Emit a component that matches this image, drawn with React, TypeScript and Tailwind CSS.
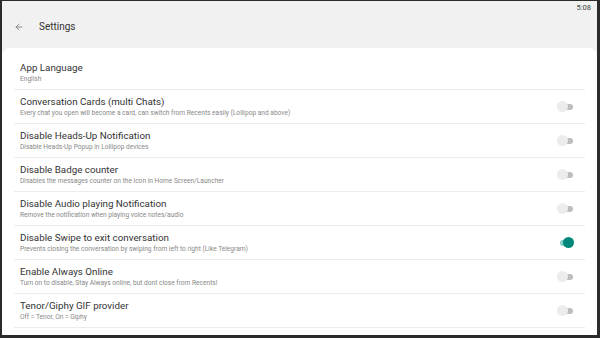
import { ArrowLeft } from 'lucide-react';

interface Setting {
  title: string;
  subtitle: string;
  toggle?: boolean;
  on?: boolean;
}

const settings: Setting[] = [
  { title: 'App Language', subtitle: 'English' },
  {
    title: 'Conversation Cards (multi Chats)',
    subtitle: 'Every chat you open will become a card, can switch from Recents easily (Lollipop and above)',
    toggle: true,
  },
  { title: 'Disable Heads-Up Notification', subtitle: 'Disable Heads-Up Popup in Lollipop devices', toggle: true },
  { title: 'Disable Badge counter', subtitle: 'Disables the messages counter on the icon in Home Screen/Launcher', toggle: true },
  { title: 'Disable Audio playing Notification', subtitle: 'Remove the notification when playing voice notes/audio', toggle: true },
  {
    title: 'Disable Swipe to exit conversation',
    subtitle: 'Prevents closing the conversation by swiping from left to right (Like Telegram)',
    toggle: true,
    on: true,
  },
  { title: 'Enable Always Online', subtitle: 'Turn on to disable, Stay Always online, but dont close from Recents!', toggle: true },
  { title: 'Tenor/Giphy GIF provider', subtitle: 'Off = Tenor, On = Giphy', toggle: true },
];

function Toggle({ on }: { on?: boolean }) {
  return (
    <div className="relative w-[17px] h-[11px] flex items-center">
      <div className={`h-[6px] w-[13px] rounded-full ml-[3px] ${on ? 'bg-[#80cbc4]' : 'bg-[#bdbdbd]'}`} />
      <div
        className={`absolute top-0 h-[11px] w-[11px] rounded-full ${
          on ? 'left-[6px] bg-[#00897b]' : 'left-0 bg-[#ececec]'
        }`}
      />
    </div>
  );
}

export default function App() {
  return (
    <div
      className="w-[600px] h-[338px] bg-[#2b2b2b] pt-[1px] pl-[2px] pr-[3px] pb-[3px] overflow-hidden"
      style={{ fontFamily: 'Roboto, "Noto Sans", sans-serif' }}
    >
      <div className="h-full bg-[#f1f1f1] flex flex-col">
        {/* Cabecera */}
        <div className="relative h-[47px] shrink-0 flex items-center pt-[4px]">
          <span className="absolute top-[1px] right-[6px] text-[7.5px] text-[#444]">5:08</span>
          <ArrowLeft className="ml-[12px] w-[10px] h-[10px] text-[#777]" strokeWidth={2} />
          <span className="ml-[15px] text-[10px] text-[#333]">Settings</span>
        </div>

        {/* Lista */}
        <div className="flex-1 bg-white rounded-t-[8px] pt-[8px] px-[12px]">
          {settings.map((s) => (
            <div key={s.title} className="h-[34px] border-b border-[#ececec] flex items-center pl-[6px] pr-[11px]">
              <div className="flex-1 flex flex-col">
                <span className="text-[9.8px] leading-[12px] text-[#333]">{s.title}</span>
                <span className="text-[6.6px] leading-[10px] text-[#888]">{s.subtitle}</span>
              </div>
              {s.toggle && <Toggle on={s.on} />}
            </div>
          ))}
        </div>
      </div>
    </div>
  );
}
